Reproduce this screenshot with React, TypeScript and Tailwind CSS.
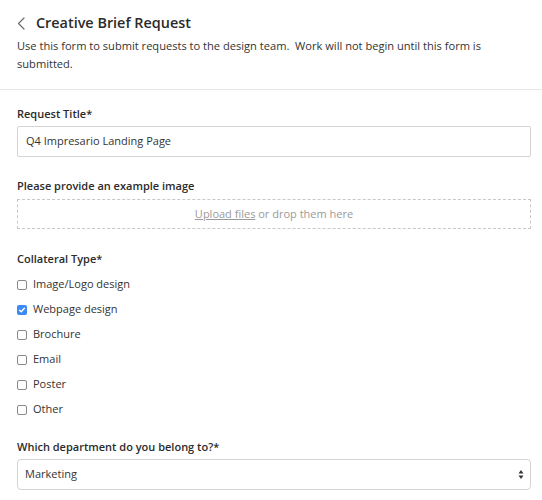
import React from "react";

const rows = [
  { label: "Image/Logo design", checked: false },
  { label: "Webpage design", checked: true },
  { label: "Brochure", checked: false },
  { label: "Email", checked: false },
  { label: "Poster", checked: false },
  { label: "Other", checked: false },
];

function Box({ checked }: { checked: boolean }) {
  if (checked) {
    return (
      <span className="flex h-[10px] w-[10px] items-center justify-center rounded-[2px] bg-[#3d8af7]">
        <svg width="8" height="8" viewBox="0 0 8 8" fill="none">
          <path d="M1.6 4.2 L3.2 5.8 L6.4 2.2" stroke="white" strokeWidth="1.4" strokeLinecap="round" strokeLinejoin="round" />
        </svg>
      </span>
    );
  }
  return <span className="block h-[10px] w-[10px] rounded-[2px] border border-[#8a8a8a] bg-white" />;
}

export default function App() {
  return (
    <div className="min-h-[500px] w-[542px] bg-white text-[#333333]" style={{ fontFamily: "'Open Sans', 'Liberation Sans', sans-serif" }}>
      <div className="border-b border-[#e6e6e6] pb-[16px] pl-[17px] pr-[11px] pt-[11px]">
        <div className="flex items-center">
          <svg width="9" height="13" viewBox="0 0 9 13" fill="none" className="mr-[10px]">
            <path d="M7 1 L1.5 6.5 L7 12" stroke="#6b6b6b" strokeWidth="1.2" strokeLinecap="round" strokeLinejoin="round" />
          </svg>
          <h1 className="text-[14.4px] font-semibold leading-[24px] text-[#2b2b2b]">Creative Brief Request</h1>
        </div>
        <p className="mt-[2px] max-w-[490px] text-[11.1px] leading-[18px] text-[#333333]">
          Use this form to submit requests to the design team.{"\u00a0"} Work will not begin until this form is submitted.
        </p>
      </div>

      <div className="pl-[17px] pr-[11px] pt-[14px]">
        <div className="text-[11px] font-semibold leading-[19px] text-[#2b2b2b]">Request Title*</div>
        <div className="mt-[3px] flex h-[31px] items-center rounded-[2px] border border-[#d4d4d4] px-[8px] text-[11px] text-[#333333]">
          Q4 Impresario Landing Page
        </div>

        <div className="mt-[19px] text-[11px] font-semibold leading-[19px] text-[#2b2b2b]">Please provide an example image</div>
        <div className="mt-[4px] flex h-[30px] items-center justify-center border border-dashed border-[#c8c8c8] text-[11px] text-[#9a9a9a]">
          <span className="underline decoration-[#9a9a9a]">Upload files</span>
          <span>&nbsp;or drop them here</span>
        </div>

        <div className="mt-[20px] text-[11px] font-semibold leading-[19px] text-[#2b2b2b]">Collateral Type*</div>
        <div className="mt-[4px] flex flex-col">
          {rows.map((r) => (
            <div key={r.label} className="flex h-[25px] items-center">
              <span className="mr-[6px]">
                <Box checked={r.checked} />
              </span>
              <span className="text-[11px] text-[#333333]">{r.label}</span>
            </div>
          ))}
        </div>

        <div className="mt-[15px] text-[11px] font-semibold leading-[19px] text-[#2b2b2b]">Which department do you belong to?*</div>
        <div className="mt-[3px] flex h-[31px] items-center justify-between rounded-[4px] border border-[#d4d4d4] pl-[7px] pr-[6px] text-[11px] text-[#333333]">
          <span>Marketing</span>
          <svg width="6" height="11" viewBox="0 0 6 11">
            <path d="M3 1 L5.5 4.5 L0.5 4.5 Z" fill="#333" />
            <path d="M3 10 L5.5 6.5 L0.5 6.5 Z" fill="#333" />
          </svg>
        </div>
      </div>
    </div>
  );
}
